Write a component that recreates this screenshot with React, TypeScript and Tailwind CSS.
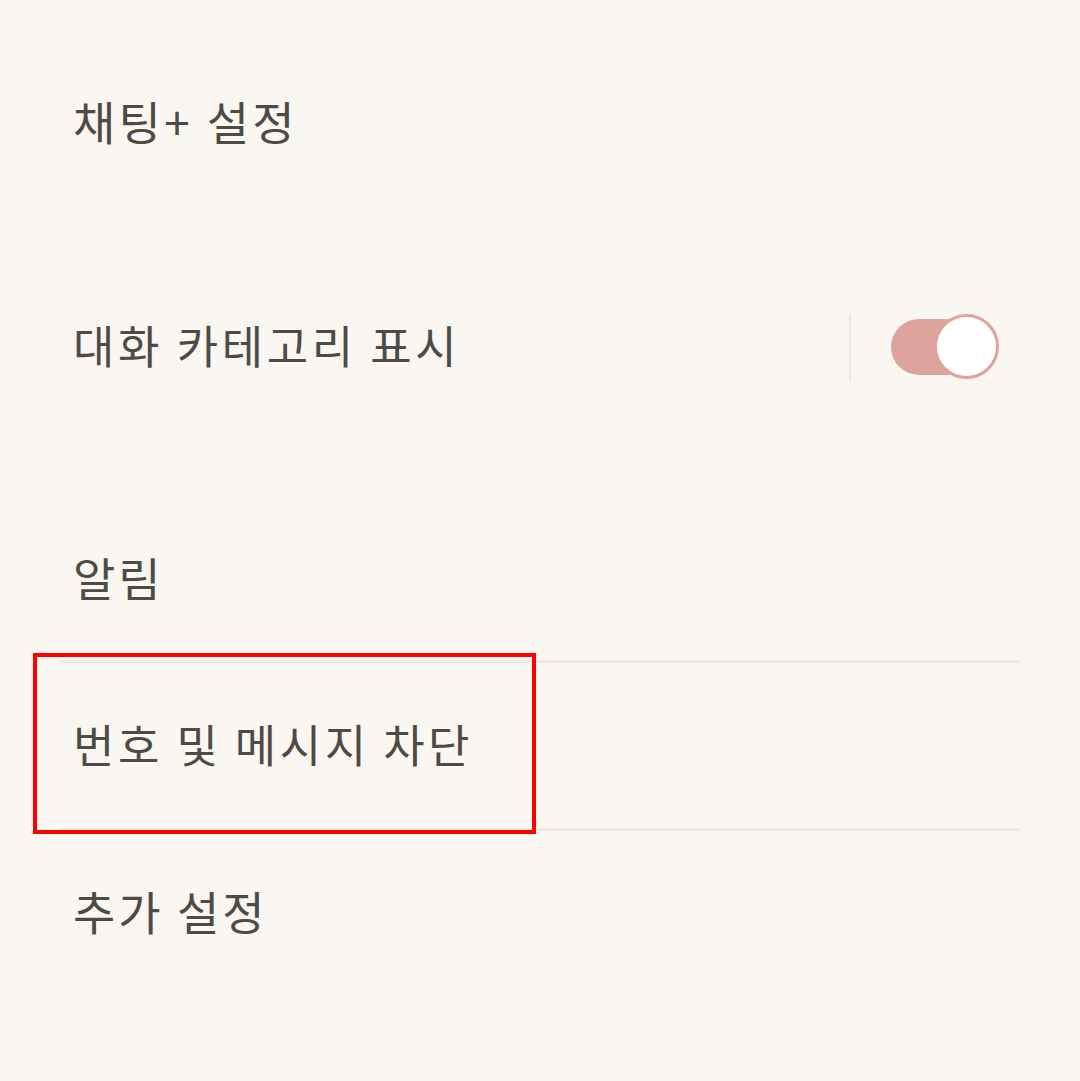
export default function App() {
  const font = { fontFamily: '"Noto Sans CJK KR", "Noto Sans", sans-serif' };
  return (
    <div className="relative w-[1080px] h-[1081px] bg-[#faf6f1] overflow-hidden" style={font}>
      <div className="flex flex-col">
        <div className="h-[244px] flex items-center pl-[73px] pb-[4px]">
          <span className="text-[46px] leading-none font-normal text-[#4e4a46] tracking-[3.3px]">채팅+ 설정</span>
        </div>
        <div className="h-[206px] flex items-center pl-[73px] pr-[81px]">
          <span className="flex-1 text-[45px] leading-none font-normal text-[#4e4a46] tracking-[3.6px] pb-[6px]">대화 카테고리 표시</span>
          <div className="w-[2px] h-[66px] bg-[#f1e6da] mr-[40px]" />
          <div className="relative w-[108px] h-[66px] flex items-center">
            <div className="h-[56px] w-[84px] rounded-full bg-[#dfa39d]" />
            <div className="absolute right-0 top-0 w-[65px] h-[65px] rounded-full bg-white border-[3px] border-[#dfa39d]" />
          </div>
        </div>
        <div className="h-[78px]" />
        <div className="h-[100px] flex items-center pl-[73px] pb-[4px]">
          <span className="text-[46px] leading-none font-normal text-[#4e4a46] tracking-[3px]">알림</span>
        </div>
        <div className="h-[32px]" />
        <div className="mx-[60px] h-[3px] bg-[#f3ebe1]" />
        <div className="h-[165px] flex items-center pl-[73px] pb-[4px]">
          <span className="text-[45px] leading-none font-normal text-[#4e4a46] tracking-[3.5px]">번호 및 메시지 차단</span>
        </div>
        <div className="mx-[60px] h-[3px] bg-[#f3ebe1]" />
        <div className="h-[162px] flex items-center pl-[73px] pb-[4px]">
          <span className="text-[46px] leading-none font-normal text-[#4e4a46] tracking-[3px]">추가 설정</span>
        </div>
      </div>
      <div className="absolute left-[33px] top-[653px] w-[503px] h-[181px] border-[4px] border-[#ff0000]" />
    </div>
  );
}
